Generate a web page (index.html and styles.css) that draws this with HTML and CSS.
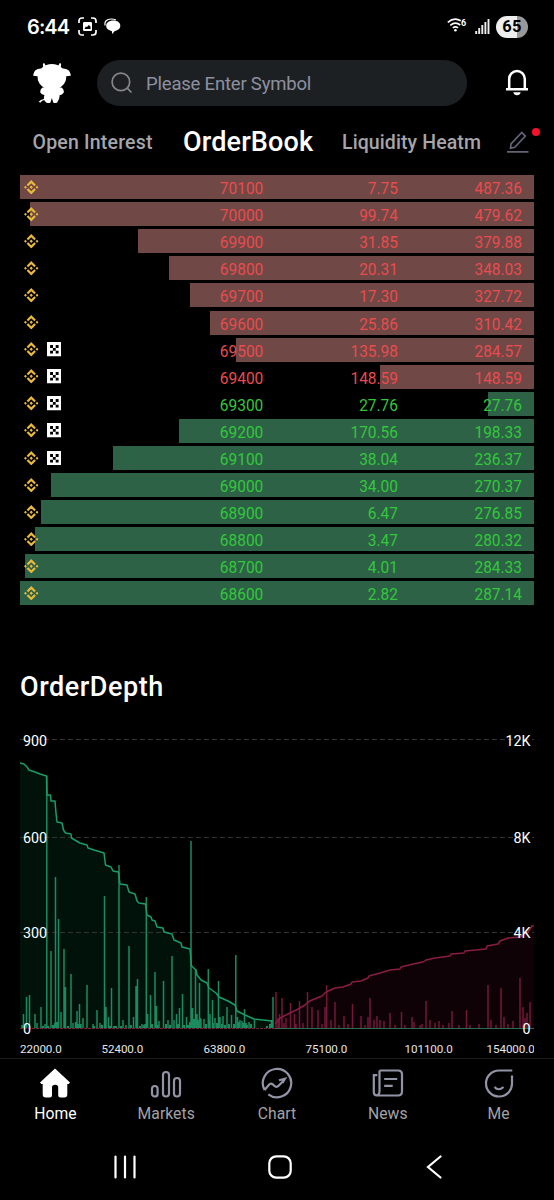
FILE: index.html
```html
<!DOCTYPE html>
<html lang="en">
<head>
<meta charset="utf-8">
<title>OrderBook</title>
<link rel="stylesheet" href="styles.css">
</head>
<body>
<svg class="defs" width="0" height="0">
  <symbol id="bnb" viewBox="0 0 14 14">
    <path d="M3.300 5.300 7 1.600l3.700 3.700M3.300 8.700 7 12.400l3.700-3.700" fill="none" stroke="#e9b93d" stroke-width="2.100"/>
    <path d="M7 5.400 8.600 7 7 8.600 5.400 7zM1.400 5.600 2.800 7 1.400 8.400 0 7zM12.600 5.600 14 7l-1.400 1.400L11.200 7z" fill="#e9b93d"/>
  </symbol>
  <symbol id="okx" viewBox="0 0 15 15">
    <path d="M0 0h15v15H0z" fill="#fff"/>
    <path d="M3.200 3.200h3v3h-3zM9 3.200h3v3H9zM6.100 6.100H9V9H6.100zM3.200 9h3v3h-3zM9 9h3v3H9z" fill="#000"/>
  </symbol>
</svg>
<div class="screen">
  <div class="status">
    <span class="clock">6:44</span>
    <svg class="status-shot" width="19" height="19" viewBox="0 0 19 19"><path d="M1 6V4q0-3 3-3h2M13 1h2q3 0 3 3v2M18 13v2q0 3-3 3h-2M6 18H4q-3 0-3-3v-2" fill="none" stroke="#fff" stroke-width="1.700"/><path fill-rule="evenodd" d="M6.200 5h6.600q1.200 0 1.200 1.200v6.600q0 1.200-1.200 1.200H6.200Q5 14 5 12.800V6.200Q5 5 6.200 5zM6.500 12h6V9.500L10.800 8 9 10 7.800 9.500z" fill="#fff"/></svg>
    <svg class="status-chat" width="17" height="17" viewBox="0 0 17 17"><path d="M1.200 7.500C0 3.500 3 1 7 1q3 0 5 1" fill="none" stroke="#fff" stroke-width="1.200"/><path d="M9.300 2.600c4.200 0 7 2.200 7 5.200 0 2.800-2.300 4.800-5.500 5.200L8.200 16l-.4-3C4.500 12.500 2.200 10.500 2.200 7.800c0-3 3-5.200 7.100-5.200z" fill="#fff"/></svg>
    <svg class="status-wifi" width="20" height="16" viewBox="0 0 20 16"><path d="M.8 5.300q6.500-5.600 13-1.500M3.300 8.300q5-4.200 10-.3M5.800 10.800q2.600-1.900 5.200 0" fill="none" stroke="#fff" stroke-width="1.600"/><circle cx="8.400" cy="13.300" r="1.300" fill="#fff"/><text x="14" y="8.500" class="wifi-gen">6</text></svg>
    <svg class="status-signal" width="15" height="15" viewBox="0 0 15 15"><path d="M1.200 15v-3M4.200 15V9M7.300 15V6M10.400 15V3M13.500 15V0" stroke="#eee" stroke-width="1.900"/></svg>
    <span class="battery">65</span>
  </div>

  <div class="header">
    <svg class="mascot" width="38" height="40" viewBox="0 0 38 40" fill="#fff">
      <ellipse cx="18.900" cy="14" rx="14.300" ry="12.900"/>
      <path d="M12 6Q9 3.500 10.200.5q.7-.9 1.400 0l1.400 3zM26 6q3-2.500 1.800-5.500-.7-.9-1.400 0L25 3.500z"/>
      <path d="M9 5.500Q1 5 0 12.500q4 1.500 8 .3zM29 5.500q8-.5 9 7-4 1.500-8 .3z"/>
      <path d="M9.500 24.500h19q2.700 1.700 2.300 5-1.600 2.500-4.300 2.800.6 3-2.300 7.200-2 1.300-4 0L18.900 35l-1.400 4.500q-2 1.300-4.300 0-1.400-1.500-2-2.500-3 .5-3.500 2.500L5.500 39q2-2.500 5.500-3-.3-2 .5-4-3-.2-4.200-2.500Q7 26 9.500 24.500z"/>
    </svg>
    <div class="search">
      <svg width="22" height="22" viewBox="0 0 22 22"><circle cx="9.900" cy="9.900" r="8.800"/><path d="m16.200 16.200 4.300 4.300"/></svg>
      <span>Please Enter Symbol</span>
    </div>
    <svg class="bell" width="22" height="28" viewBox="0 0 22 28"><path d="M3.200 19.500V9.800a7.800 7.800 0 0 1 15.600 0v9.700M0 20.200h22" fill="none" stroke="#fff" stroke-width="2.500"/><path d="M7.300 23.300h7.400a3.800 3.800 0 0 1-7.400 0z" fill="#fff"/></svg>
  </div>

  <div class="tabs">
    <span class="tab tab-first">Open Interest</span>
    <span class="tab tab-active">OrderBook</span>
    <span class="tab tab-last">Liquidity Heatm</span>
    <span class="edit">
      <svg width="22" height="22" viewBox="0 0 22 22"><path d="m4 12.800-.5 4.400 4.300-.9L18.300 5.100 14.800 1.500zM0 20.800h21.500" fill="none" stroke="#636477" stroke-width="1.700"/></svg>
      <i class="dot"></i>
    </span>
  </div>

  <div class="book">
    <div class="row ask"><div class="bar" style="width:100%"></div><div class="venues"><svg><use href="#bnb"/></svg></div><span>70100</span><span>7.75</span><span>487.36</span></div>
    <div class="row ask"><div class="bar" style="width:98%"></div><div class="venues"><svg><use href="#bnb"/></svg></div><span>70000</span><span>99.74</span><span>479.62</span></div>
    <div class="row ask"><div class="bar" style="width:77%"></div><div class="venues"><svg><use href="#bnb"/></svg></div><span>69900</span><span>31.85</span><span>379.88</span></div>
    <div class="row ask"><div class="bar" style="width:71%"></div><div class="venues"><svg><use href="#bnb"/></svg></div><span>69800</span><span>20.31</span><span>348.03</span></div>
    <div class="row ask"><div class="bar" style="width:67%"></div><div class="venues"><svg><use href="#bnb"/></svg></div><span>69700</span><span>17.30</span><span>327.72</span></div>
    <div class="row ask"><div class="bar" style="width:63%"></div><div class="venues"><svg><use href="#bnb"/></svg></div><span>69600</span><span>25.86</span><span>310.42</span></div>
    <div class="row ask"><div class="bar" style="width:58%"></div><div class="venues"><svg><use href="#bnb"/></svg><svg class="okx"><use href="#okx"/></svg></div><span>69500</span><span>135.98</span><span>284.57</span></div>
    <div class="row ask"><div class="bar" style="width:30%"></div><div class="venues"><svg><use href="#bnb"/></svg><svg class="okx"><use href="#okx"/></svg></div><span>69400</span><span>148.59</span><span>148.59</span></div>
    <div class="row bid"><div class="bar" style="width:9%"></div><div class="venues"><svg><use href="#bnb"/></svg><svg class="okx"><use href="#okx"/></svg></div><span>69300</span><span>27.76</span><span>27.76</span></div>
    <div class="row bid"><div class="bar" style="width:69%"></div><div class="venues"><svg><use href="#bnb"/></svg><svg class="okx"><use href="#okx"/></svg></div><span>69200</span><span>170.56</span><span>198.33</span></div>
    <div class="row bid"><div class="bar" style="width:82%"></div><div class="venues"><svg><use href="#bnb"/></svg><svg class="okx"><use href="#okx"/></svg></div><span>69100</span><span>38.04</span><span>236.37</span></div>
    <div class="row bid"><div class="bar" style="width:94%"></div><div class="venues"><svg><use href="#bnb"/></svg></div><span>69000</span><span>34.00</span><span>270.37</span></div>
    <div class="row bid"><div class="bar" style="width:96%"></div><div class="venues"><svg><use href="#bnb"/></svg></div><span>68900</span><span>6.47</span><span>276.85</span></div>
    <div class="row bid"><div class="bar" style="width:97%"></div><div class="venues"><svg><use href="#bnb"/></svg></div><span>68800</span><span>3.47</span><span>280.32</span></div>
    <div class="row bid"><div class="bar" style="width:99%"></div><div class="venues"><svg><use href="#bnb"/></svg></div><span>68700</span><span>4.01</span><span>284.33</span></div>
    <div class="row bid"><div class="bar" style="width:100%"></div><div class="venues"><svg><use href="#bnb"/></svg></div><span>68600</span><span>2.82</span><span>287.14</span></div>
  </div>

  <h2 class="title">OrderDepth</h2>

  <svg class="depth" width="514" height="329" viewBox="20 729 514 329">
    <path class="bid-area" d="M20 1028V763l4 1 3 3 2 3 6 2 5 2 6.500 2 .5 19h3.500l.5 6h4l1 12 1 9 5 1 1.500 7 2 3 5.500 1 .5 4 5 3 3.500 2 7 2 1 3 6 2 10 3 1.500 12 5.500 2 2 4 5.500 1 1.500 12 7 1 2 7 6 2 2 7 2 2 6.500 1 1.500 11 4 2 1 3 3 1 2 6 6 1 1 4 8 2 2 6 7 3 1 4 8 2 1.500 17 4.500 4 1 5 4 5 6 3 2 5 7 5 3 4 9 4 7 4 2 6 8 4 9 4 18 2V1028z"/>
    <path class="ask-area" d="M275 1024l5-6 10-5 8-4 7-4 3-3 4-2 10-4 4-4 9-4 8-1 8-3 1-2 9-1 7-3 1-2 11-3 10-3 10-1 1-2 12-3 10-2 3-2 9-2 15-2 1-2 13-1 1-2 21-2 1-3 11-2 2-3 8-3 12-1 8-5 4-6h2V1028H275z"/>
    <path class="grid" d="M20 739.500H534M20 837.500H534M20 932.500H534"/>
    <path class="bid-bars" d="M22 1028v-3M23.500 1028v-14M26.500 1028v-31M29.500 1028v-33M35 1028v-14M37 1028v-5M41 1028v-21M45 1028v-4M46.800 1028V776M51 1028v-77M55.500 1028V877M57 1028v-6M58.500 1028V919M61 1028v-16M64 1028v-79M65.500 1028v-41M71 1028v-54M73 1028v-5M75.500 1028v-6M77 1028v-17M79.500 1028v-24M81 1028v-4M83 1028v-10M87 1028v-43M93 1028v-4M97 1028v-18M100 1028v-5M104.500 1028V896M106 1028v-21M108.500 1028v-11M111.500 1028v-40M119 1028V865M123 1028v-8M126 1028v-3M129 1028v-82M133.500 1028v-11M136 1028v-42M137.500 1028v-49M142 1028v-4M145 1028v-4M146.300 1028V897M147.700 1028v-14M150.500 1028v-33M155 1028v-56M156.500 1028v-22M159 1028v-7M163.500 1028v-47M168 1028v-8M172 1028v-72M174 1028v-8M176.500 1028v-14M179.500 1028v-20M182.500 1028v-34M186.500 1028v-11M191 1028V841M192.500 1028v-20M195.500 1028v-59M197 1028v-14M199.500 1028v-45M201 1028v-9M204 1028v-9M208.300 1028v-59M210 1028v-14M212.500 1028v-28M218.500 1028v-47M215 1028v-10M220 1028v-11M223 1028v-12M227 1028v-21M231.500 1028v-13M235.800 1028v-73M237.500 1028v-11M240 1028v-8M242 1028v-7M244.500 1028v-19M246 1028v-5M249 1028v-6M254.500 1028v-8M271.500 1028v-8M273 1028v-31"/>
    <path class="bid-bars faint" d="M43 1028v-2M48 1028v-2M53 1028v-3M55 1028v-5M68 1028v-2M78 1028v-4M94 1028v-2M102 1028v-3M110 1028v-2M114 1028v-2M116 1028v-2M121 1028v-2M131 1028v-3M140 1028v-2M144 1028v-3M152 1028v-4M158 1028v-3M166 1028v-4M170 1028v-3M178 1028v-4M184 1028v-3M188 1028v-3M190 1028v-6M194 1028v-9M198 1028v-8M200 1028v-10M206 1028v-4M209 1028v-8M213 1028v-5M217 1028v-5M222 1028v-4M225 1028v-3M229 1028v-4M234 1028v-4M239 1028v-6M243 1028v-5M247 1028v-3M251 1028v-4M267 1028v-2M270 1028v-4"/>
    <path class="ask-bars" d="M276 1028v-36M278 1028v-10M279.500 1028v-14M282 1028v-30M284 1028v-5M286 1028v-10M290.500 1028v-25M294.500 1028v-14M296 1028v-4M299.500 1028v-27M303 1028v-5M307.500 1028v-36M312 1028v-21M318 1028v-18M322 1028v-4M325 1028v-21M326.700 1028v-43M331 1028v-8M335 1028v-26M339 1028v-3M344 1028v-12M348 1028v-4M352.500 1028v-24M361 1028v-12M365 1028v-3M368 1028v-11M370 1028v-30M374 1028v-8M377 1028v-12M380 1028v-8M384 1028v-7M390 1028v-15M395 1028v-3M401.500 1028v-16M405 1028v-3M412 1028v-11M414 1028v-6M420 1028v-3M422 1028v-4M426 1028v-27M430 1028v-8M435 1028v-5M439 1028v-7M443 1028v-3M449 1028v-5M452 1028v-17M459 1028v-3M466.500 1028v-18M470 1028v-3M479 1028v-4M488 1028v-43M491 1028v-8M496 1028v-3M501 1028v-40M504 1028v-11M508 1028v-4M513 1028v-7M520 1028v-50M523 1028v-21M525 1028v-10M527 1028v-15M530 1028v-26"/>
    <path class="zero-bid" d="M20 1028.500H275"/>
    <path class="zero-ask" d="M275 1028.500H534"/>
    <path class="bid-line" d="M20 763l4 1 3 3 2 3 6 2 5 2 6.500 2 .5 19h3.500l.5 6h4l1 12 1 9 5 1 1.500 7 2 3 5.500 1 .5 4 5 3 3.500 2 7 2 1 3 6 2 10 3 1.500 12 5.500 2 2 4 5.500 1 1.500 12 7 1 2 7 6 2 2 7 2 2 6.500 1 1.500 11 4 2 1 3 3 1 2 6 6 1 1 4 8 2 2 6 7 3 1 4 8 2 1.500 17 4.500 4 1 5 4 5 6 3 2 5 7 5 3 4 9 4 7 4 2 6 8 4 9 4 18 2"/>
    <path class="ask-line" d="M275 1024l5-6 10-5 8-4 7-4 3-3 4-2 10-4 4-4 9-4 8-1 8-3 1-2 9-1 7-3 1-2 11-3 10-3 10-1 1-2 12-3 10-2 3-2 9-2 15-2 1-2 13-1 1-2 21-2 1-3 11-2 2-3 8-3 12-1 8-5 4-6h2"/>
    <g class="y-labels">
      <text x="23" y="745.500">900</text><text x="23" y="842.500">600</text><text x="23" y="937.500">300</text><text x="23" y="1034">0</text>
      <g text-anchor="end"><text x="530.500" y="745.500">12K</text><text x="530.500" y="842.500">8K</text><text x="530.500" y="937.500">4K</text><text x="530.500" y="1034">0</text></g>
    </g>
    <g class="x-labels">
      <text x="20" y="1052.800">22000.0</text><text x="101.500" y="1052.800">52400.0</text><text x="203.500" y="1052.800">63800.0</text><text x="305.500" y="1052.800">75100.0</text><text x="404.500" y="1052.800">101100.0</text><text x="486.500" y="1052.800">154000.0</text>
    </g>
  </svg>

  <div class="nav">
    <div class="nav-item active"><svg viewBox="0 0 32 32"><path d="M16 1.500 31 15.500 29.700 17H28.300v10.500q0 3-3 3H21.500q-2.300 0-2.300-2.300V20.500q0-2.800-3.100-2.800T13 20.500v7.700q0 2.300-2.300 2.300H6.700q-3 0-3-3V17H2.300L1 15.500z" fill="#fff"/></svg><span>Home</span></div>
    <div class="nav-item"><svg viewBox="0 0 32 32"><rect x="2" y="19" width="5.600" height="10.500" rx="2.800"/><rect x="13" y="5" width="6" height="24.500" rx="3"/><rect x="24" y="11" width="6" height="18.500" rx="3"/></svg><span>Markets</span></div>
    <div class="nav-item"><svg viewBox="0 0 32 32"><path d="M3.600 23A14.200 14.200 0 1 1 7.300 27.300M3.600 23l4.400-5.300q1.800-2 3.800-.3l2 1.800q2 1.400 3.800-.5L23 13.200M18 13.300l6-1.500-2.500 4.200"/></svg><span>Chart</span></div>
    <div class="nav-item"><svg viewBox="0 0 32 32"><path d="M7.500 3.500H26q4 0 4 4v17q0 4-4 4H5q-3.200 0-3.200-3.200V8.200h3.500M7.500 3.500V24q0 4.500-3.500 4.500M12.200 12h13M12.200 18.800h8.500"/></svg><span>News</span></div>
    <div class="nav-item"><svg viewBox="0 0 32 32"><path d="M29.300 3.500H16A13 13 0 1 0 29 16V8.500M11.500 20q4 4.500 9 0"/></svg><span>Me</span></div>
  </div>

  <div class="system">
    <svg width="22" height="24" viewBox="0 0 22 24"><path d="M1.500 1.500v21M11 1.500v21M20.500 1.500v21"/></svg>
    <svg width="24" height="24" viewBox="0 0 24 24"><rect x="1.300" y="1.300" width="21.400" height="21.400" rx="7"/></svg>
    <svg width="16" height="24" viewBox="0 0 16 24"><path d="M14.500 1.500 2 12l12.500 10.500"/></svg>
  </div>
</div>
</body>
</html>
```

FILE: styles.css
```css
* { box-sizing: border-box; }

body {
  margin: 0;
  background: #000;
  color: #fff;
  font-family: Roboto, "Noto Sans", sans-serif;
}

.defs { display: block; }

.screen {
  width: 554px;
  height: 1200px;
  overflow: hidden;
  display: flex;
  flex-direction: column;
}

.status {
  height: 53px;
  padding: 0 26px 0 27px;
  display: flex;
  align-items: center;
  flex: none;
}
.clock { width: 42px; font: 600 20px/24px Inter, sans-serif; letter-spacing: -.9px; white-space: nowrap; }
.status-shot { margin-left: 9px; }
.status-chat { margin-left: 7px; }
.status-wifi { margin-left: auto; margin-top: -3px; }
.wifi-gen { font: 700 9px Roboto, sans-serif; fill: #fff; }
.status-signal { margin-left: 8px; }
.battery {
  width: 32px;
  height: 22px;
  margin-left: 6px;
  border-radius: 11px;
  background: linear-gradient(90deg, #eee 65%, #999 65%);
  color: #000;
  font: 700 16.500px/22px Roboto, sans-serif;
  letter-spacing: .4px;
  text-align: center;
}

.header {
  height: 60px;
  padding: 0 26px 1px 33px;
  display: flex;
  align-items: center;
  flex: none;
}
.search {
  width: 370px;
  height: 46px;
  margin-left: 26px;
  padding-left: 14px;
  border-radius: 23px;
  background: #1d2023;
  display: flex;
  align-items: center;
  gap: 13px;
  color: #8e90a0;
  font-size: 18.500px;
  letter-spacing: -.2px;
}
.search span { padding-top: 3px; }
.search svg { fill: none; stroke: #85858b; stroke-width: 1.700; }
.bell { margin-left: auto; }

.tabs {
  height: 62.300px;
  padding-left: 32.500px;
  display: flex;
  align-items: center;
  flex: none;
  padding-bottom: 4px;
}
.tab { color: #a5a5ab; font-size: 19.500px; font-weight: 500; white-space: nowrap; }
.tab-first { width: 150.500px; letter-spacing: .2px; }
.tab-active { width: 159px; color: #fff; font-size: 27px; letter-spacing: .15px; }
.tab-last { width: 139px; letter-spacing: .1px; }
.edit { position: relative; margin-left: 26px; display: flex; }
.dot {
  position: absolute;
  left: 25px;
  top: -3px;
  width: 8px;
  height: 8px;
  border-radius: 50%;
  background: #f5102c;
}

.book {
  padding: 0 20px;
  display: grid;
  grid-auto-rows: 24px;
  row-gap: 3.050px;
}
.row {
  display: grid;
  grid-template-columns: 100px 143.300px 135px 124px 11.700px;
  align-items: center;
}
.row > * { grid-row: 1; }
.bar { grid-column: 1 / -1; justify-self: end; height: 24px; }
.ask .bar { background: #704845; }
.bid .bar { background: #2d6247; }
.venues { grid-column: 1; display: flex; align-items: center; gap: 8px; padding: 0 0 0 4px; }
.venues svg { width: 14.500px; height: 14.500px; }
.row span {
  font-size: 17px;
  line-height: 20px;
  text-align: right;
  padding-top: 2px;
  transform: scaleX(.91);
  transform-origin: right;
}
.row span:nth-of-type(1) { grid-column: 2; }
.row span:nth-of-type(2) { grid-column: 3; }
.row span:nth-of-type(3) { grid-column: 4; }
.ask span { color: #e84c50; }
.bid span { color: #34c73c; }

.title {
  margin: 66px 0 0 20px;
  font-size: 27px;
  line-height: 32px;
  font-weight: 500;
  letter-spacing: .55px;
}

.depth { display: block; margin: 25.700px 0 0 20px; flex: none; }
.grid { stroke: #303234; stroke-dasharray: 5 3; fill: none; }
.bid-area { fill: #00120a; }
.ask-area { fill: #0e0206; }
.bid-bars, .ask-bars { fill: none; stroke-width: 1.500; }
.bid-bars { stroke: #1c8a5f; }
.faint { stroke-width: 2; }
.ask-bars { stroke: #73183a; }
.zero-bid { stroke: #65283b; stroke-dasharray: 3 1; }
.zero-ask { stroke: #286b4f; }
.bid-line, .ask-line { fill: none; stroke-width: 1.500; stroke-linejoin: round; }
.bid-line { stroke: #189d69; }
.ask-line { stroke: #8a1d43; }
.y-labels { fill: #fff; font-size: 14.300px; }
.x-labels { fill: #e6e6e6; font-size: 11.600px; letter-spacing: -.05px; }

.nav {
  height: 75px;
  padding-top: 8px;
  border-top: 1px solid #1c1c1d;
  display: grid;
  grid-template-columns: repeat(5, 1fr);
  flex: none;
}
.nav-item { display: flex; flex-direction: column; align-items: center; color: #a3a3a6; font-size: 15.700px; line-height: 20px; letter-spacing: .05px; }
.nav-item svg { width: 32px; height: 32px; fill: none; stroke: #9294a6; stroke-width: 2.200; }
.nav-item span { margin-top: 5px; }
.active { color: #fff; }
.active svg { stroke: none; }

.system { height: 68px; padding: 1px 112px 0 114px; display: flex; align-items: center; flex: none; }
.system svg { fill: none; stroke: #fff; stroke-width: 2.200; stroke-linecap: round; }
.system svg:nth-child(2) { margin-left: 132px; }
.system svg:nth-child(3) { margin-left: auto; }
```
